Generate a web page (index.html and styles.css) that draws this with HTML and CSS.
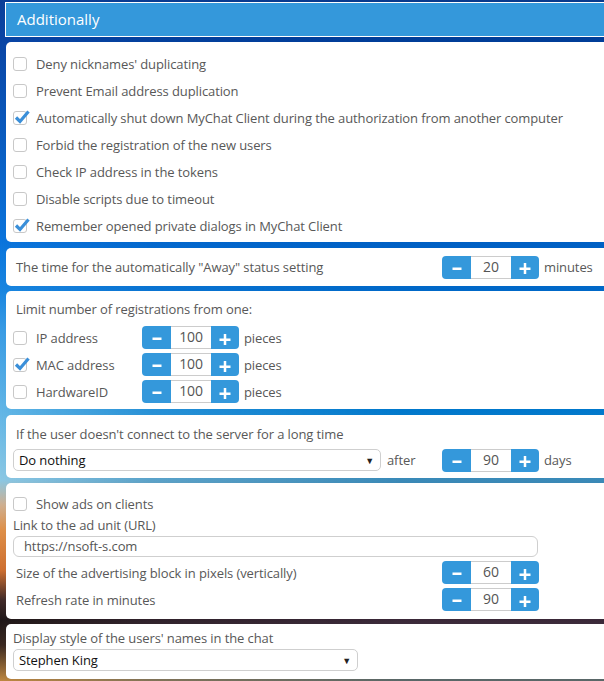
FILE: index.html
```html
<!DOCTYPE html>
<html>
<head>
<meta charset="utf-8">
<link rel="stylesheet" href="styles.css">
</head>
<body>
<div class="page">
  <div class="header">Additionally</div>

  <div class="card card-checks">
    <div class="check-row"><span class="cb"></span><span>Deny nicknames' duplicating</span></div>
    <div class="check-row"><span class="cb"></span><span>Prevent Email address duplication</span></div>
    <div class="check-row"><span class="cb on"><svg viewBox="0 0 16 16" class="tick"><path d="M2 8.5 L6 12.5 L14.5 2.5"/></svg></span><span>Automatically shut down MyChat Client during the authorization from another computer</span></div>
    <div class="check-row"><span class="cb"></span><span>Forbid the registration of the new users</span></div>
    <div class="check-row"><span class="cb"></span><span>Check IP address in the tokens</span></div>
    <div class="check-row"><span class="cb"></span><span>Disable scripts due to timeout</span></div>
    <div class="check-row"><span class="cb on"><svg viewBox="0 0 16 16" class="tick"><path d="M2 8.5 L6 12.5 L14.5 2.5"/></svg></span><span>Remember opened private dialogs in MyChat Client</span></div>
  </div>

  <div class="card card-away">
    <span class="label-indent row-label">The time for the automatically "Away" status setting</span>
    <div class="stepper">
      <div class="sb minus"><svg viewBox="0 0 12 12"><rect x="1.5" y="5.5" width="9" height="2.5"/></svg></div>
      <div class="sv">20</div>
      <div class="sb plus"><svg viewBox="0 0 12 12"><rect x="0.5" y="5.5" width="11" height="2.5"/><rect x="4.75" y="1" width="2.5" height="11.5"/></svg></div>
    </div>
    <span class="unit">minutes</span>
  </div>

  <div class="card card-limit">
    <div class="title label-indent">Limit number of registrations from one:</div>
    <div class="limit-row">
      <div class="limit-label"><span class="cb"></span><span>IP address</span></div>
      <div class="stepper">
        <div class="sb minus"><svg viewBox="0 0 12 12"><rect x="1.5" y="5.5" width="9" height="2.5"/></svg></div>
        <div class="sv">100</div>
        <div class="sb plus"><svg viewBox="0 0 12 12"><rect x="0.5" y="5.5" width="11" height="2.5"/><rect x="4.75" y="1" width="2.5" height="11.5"/></svg></div>
      </div>
      <span class="unit">pieces</span>
    </div>
    <div class="limit-row">
      <div class="limit-label"><span class="cb on"><svg viewBox="0 0 16 16" class="tick"><path d="M2 8.5 L6 12.5 L14.5 2.5"/></svg></span><span>MAC address</span></div>
      <div class="stepper">
        <div class="sb minus"><svg viewBox="0 0 12 12"><rect x="1.5" y="5.5" width="9" height="2.5"/></svg></div>
        <div class="sv">100</div>
        <div class="sb plus"><svg viewBox="0 0 12 12"><rect x="0.5" y="5.5" width="11" height="2.5"/><rect x="4.75" y="1" width="2.5" height="11.5"/></svg></div>
      </div>
      <span class="unit">pieces</span>
    </div>
    <div class="limit-row">
      <div class="limit-label"><span class="cb"></span><span>HardwareID</span></div>
      <div class="stepper">
        <div class="sb minus"><svg viewBox="0 0 12 12"><rect x="1.5" y="5.5" width="9" height="2.5"/></svg></div>
        <div class="sv">100</div>
        <div class="sb plus"><svg viewBox="0 0 12 12"><rect x="0.5" y="5.5" width="11" height="2.5"/><rect x="4.75" y="1" width="2.5" height="11.5"/></svg></div>
      </div>
      <span class="unit">pieces</span>
    </div>
  </div>

  <div class="card card-idle">
    <div class="title label-indent">If the user doesn't connect to the server for a long time</div>
    <div class="idle-row">
      <div class="select select-idle"><span>Do nothing</span><span class="arrow">▼</span></div>
      <span class="after">after</span>
      <div class="stepper">
        <div class="sb minus"><svg viewBox="0 0 12 12"><rect x="1.5" y="5.5" width="9" height="2.5"/></svg></div>
        <div class="sv">90</div>
        <div class="sb plus"><svg viewBox="0 0 12 12"><rect x="0.5" y="5.5" width="11" height="2.5"/><rect x="4.75" y="1" width="2.5" height="11.5"/></svg></div>
      </div>
      <span class="unit">days</span>
    </div>
  </div>

  <div class="card card-ads">
    <div class="check-row ads-check"><span class="cb"></span><span>Show ads on clients</span></div>
    <div class="link-label">Link to the ad unit (URL)</div>
    <div class="text-input">https://nsoft-s.com</div>
    <div class="ads-row">
      <span class="label-indent row-label">Size of the advertising block in pixels (vertically)</span>
      <div class="stepper">
        <div class="sb minus"><svg viewBox="0 0 12 12"><rect x="1.5" y="5.5" width="9" height="2.5"/></svg></div>
        <div class="sv">60</div>
        <div class="sb plus"><svg viewBox="0 0 12 12"><rect x="0.5" y="5.5" width="11" height="2.5"/><rect x="4.75" y="1" width="2.5" height="11.5"/></svg></div>
      </div>
    </div>
    <div class="ads-row">
      <span class="label-indent row-label">Refresh rate in minutes</span>
      <div class="stepper">
        <div class="sb minus"><svg viewBox="0 0 12 12"><rect x="1.5" y="5.5" width="9" height="2.5"/></svg></div>
        <div class="sv">90</div>
        <div class="sb plus"><svg viewBox="0 0 12 12"><rect x="0.5" y="5.5" width="11" height="2.5"/><rect x="4.75" y="1" width="2.5" height="11.5"/></svg></div>
      </div>
    </div>
  </div>

  <div class="card card-style">
    <div class="style-label">Display style of the users' names in the chat</div>
    <div class="select select-style"><span>Stephen King</span><span class="arrow">▼</span></div>
  </div>
</div>
</body>
</html>
```

FILE: styles.css
```css
html, body {
  margin: 0;
  padding: 0;
  height: 681px;
  overflow: hidden;
}
body {
  font-family: "Open Sans", "Noto Sans", sans-serif;
  font-size: 13px;
  letter-spacing: -0.1px;
  color: #585858;
  background: linear-gradient(to bottom,
    #0c3f98 0px,
    #0a45a5 40px,
    #0a74dc 240px,
    #1a86e0 290px,
    #3a9ce4 330px,
    #62b6e6 410px,
    #8cc8e4 480px,
    #d0b090 505px,
    #e09048 530px,
    #d07030 570px,
    #402a28 600px,
    #201818 620px,
    #3a2820 645px,
    #c08840 681px);
  position: relative;
}
body::before {
  content: "";
  position: absolute;
  inset: 0;
  background: linear-gradient(to bottom,
    #0a3a8c 0px,
    #003d98 40px,
    #0060c4 245px,
    #0068c8 290px,
    #0078cc 410px,
    #3a8ab8 480px,
    #5a5060 560px,
    #3a2838 620px,
    #5a6868 681px);
  -webkit-mask-image: linear-gradient(to right, transparent 0, rgba(0,0,0,0.6) 150px, #000 400px);
  mask-image: linear-gradient(to right, transparent 0, rgba(0,0,0,0.6) 150px, #000 400px);
}
.page {
  position: relative;
  width: 660px;
  padding: 2px 0 0 6px;
  display: flex;
  flex-direction: column;
}
.header {
  margin-left: -1px;
  height: 33px;
  border: 1px solid #fff;
  background: #3498db;
  color: #fff;
  font-size: 15px;
  letter-spacing: 0;
  line-height: 33px;
  padding-left: 11px;
  margin-bottom: 5px;
}
.card {
  background: #fff;
  border-radius: 5px;
  padding-left: 7px;
  box-sizing: border-box;
}

.cb {
  position: relative;
  width: 12px;
  height: 12px;
  border: 1px solid #c8c8c8;
  border-radius: 3px;
  margin-right: 9px;
  flex: none;
  background: #fff;
}
.tick {
  position: absolute;
  left: 0px;
  top: -3px;
  width: 16px;
  height: 16px;
  overflow: visible;
}
.tick path {
  fill: none;
  stroke: #3a8fd9;
  stroke-width: 3.2;
  stroke-linecap: butt;
  stroke-linejoin: miter;
}
.check-row {
  display: flex;
  align-items: center;
  height: 27px;
}
.card-checks {
  padding-top: 8px;
  height: 200px;
  margin-bottom: 6px;
}

.label-indent { padding-left: 3px; }
.row-label { width: 429px; flex: none; box-sizing: border-box; }

.stepper {
  display: flex;
  height: 23px;
  flex: none;
}
.sb {
  background: #3498db;
  display: flex;
  align-items: center;
  justify-content: center;
}
.sb svg { width: 12px; height: 12px; fill: #fff; }
.sb.minus { width: 29px; border-radius: 4px 0 0 4px; }
.sb.plus { width: 28px; border-radius: 0 4px 4px 0; }
.sb.plus svg { margin-top: 2px; }
.sb.minus svg { margin-top: 1px; }
.sv {
  width: 40px;
  box-sizing: border-box;
  border-top: 1px solid #ccc;
  border-bottom: 1px solid #ccc;
  text-align: center;
  font-size: 14px;
  line-height: 20px;
  color: #555;
  background: #fff;
}
.unit { margin-left: 5px; font-size: 13px; }

.card-away {
  height: 38px;
  display: flex;
  align-items: center;
  margin-bottom: 5px;
}

.card-limit {
  height: 118px;
  padding-top: 8px;
  margin-bottom: 6px;
}
.title { line-height: 20px; }
.card-limit .title { margin-bottom: 5px; }
.limit-row {
  display: flex;
  align-items: center;
  height: 27px;
}
.limit-label {
  display: flex;
  align-items: center;
  width: 129px;
}

.card-idle {
  height: 63px;
  padding-top: 9px;
  margin-bottom: 5px;
}
.card-idle .title { margin-bottom: 5px; }
.idle-row {
  display: flex;
  align-items: center;
  height: 22px;
}
.select {
  box-sizing: border-box;
  height: 22px;
  border: 1px solid #cfcfcf;
  border-radius: 5px;
  display: flex;
  align-items: center;
  justify-content: space-between;
  padding: 0 6px 0 5px;
  color: #111;
  font-size: 13px;
}
.arrow { font-size: 9px; color: #222; }
.select-idle { width: 368px; }
.after { width: 55px; margin-left: 6px; }

.card-ads {
  height: 136px;
  padding-top: 9px;
  margin-bottom: 5px;
}
.ads-check { height: 24px; }
.link-label { line-height: 18px; margin-bottom: 2px; }
.text-input {
  box-sizing: border-box;
  width: 525px;
  height: 21px;
  border: 1px solid #cfcfcf;
  border-radius: 6px;
  padding-left: 10px;
  line-height: 19px;
  font-size: 13px;
  color: #555;
  margin-bottom: 2px;
}
.ads-row {
  display: flex;
  align-items: center;
  height: 27px;
}

.card-style {
  height: 55px;
  padding-top: 4px;
}
.style-label { line-height: 20px; margin-bottom: 1px; }
.select-style { width: 345px; }
```
